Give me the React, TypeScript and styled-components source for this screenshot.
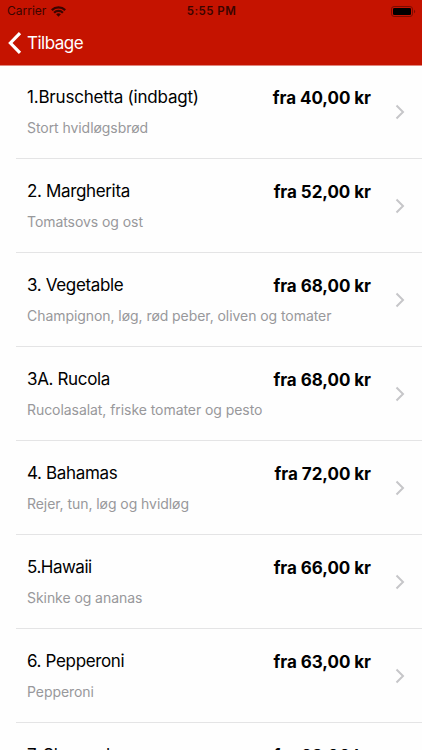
import React from "react";
import styled, { createGlobalStyle } from "styled-components";

const GlobalStyle = createGlobalStyle`
  * { box-sizing: border-box; }
  body { margin: 0; background: #fff; }
`;

const Screen = styled.div`
  width: 422px;
  height: 750px;
  overflow: hidden;
  background: #fefefe;
  font-family: Inter, "Liberation Sans", sans-serif;
  color: #000;
`;

const Header = styled.header`
  height: 66px;
  background: #c51300;
  border-bottom: 1px solid #e0867d;
`;

const StatusBar = styled.div`
  display: grid;
  grid-template-columns: 1fr auto 1fr;
  align-items: center;
  height: 22px;
  padding: 0 6px 0 7px;
  color: #3a0500;
`;

const Carrier = styled.div`
  display: flex;
  align-items: center;
  gap: 5px;
  font-size: 12px;
  line-height: 22px;
  letter-spacing: 0;
`;

const Clock = styled.div`
  font-size: 11.5px;
  font-weight: 600;
  line-height: 22px;
  letter-spacing: 0.45px;
`;

const BatterySlot = styled.div`
  display: flex;
  justify-content: flex-end;
`;

const BackButton = styled.button`
  display: flex;
  align-items: center;
  gap: 5px;
  height: 42px;
  padding: 0 0 0 8px;
  border: 0;
  background: none;
  color: #fff;
  font: 400 17px/22px Inter, sans-serif;
  letter-spacing: -0.52px;
`;

const List = styled.ul`
  margin: 0;
  padding: 0 0 0 16px;
  list-style: none;
`;

const Row = styled.li<{ $first: boolean }>`
  display: flex;
  align-items: flex-start;
  height: ${(p) => (p.$first ? 93 : 94)}px;
  padding: ${(p) => (p.$first ? 20 : 21)}px 17px 0 11px;
  border-bottom: 1px solid #e4e4e5;
`;

const Details = styled.div`
  flex: 1;
  min-width: 0;
  white-space: nowrap;
`;

const Name = styled.div<{ $tracking?: number }>`
  font-size: 17px;
  line-height: 22px;
  letter-spacing: ${(p) => p.$tracking ?? -0.35}px;
`;

const Toppings = styled.div`
  margin-top: 11px;
  color: #98989b;
  font-size: 14px;
  line-height: 18px;
  letter-spacing: -0.06px;
`;

const Price = styled.div`
  flex: none;
  margin-top: 1px;
  font-size: 17px;
  font-weight: 700;
  line-height: 22px;
  letter-spacing: -0.04px;
  white-space: nowrap;
`;

const Chevron = styled.svg`
  flex: none;
  margin: 18px 0 0 24px;
`;

type Dish = { name: string; toppings: string; price: string; tracking?: number };

const dishes: Dish[] = [
  { name: "1.Bruschetta (indbagt)", toppings: "Stort hvidløgsbrød", price: "fra 40,00 kr", tracking: -0.2 },
  { name: "2. Margherita", toppings: "Tomatsovs og ost", price: "fra 52,00 kr" },
  { name: "3. Vegetable", toppings: "Champignon, løg, rød peber, oliven og tomater", price: "fra 68,00 kr" },
  { name: "3A. Rucola", toppings: "Rucolasalat, friske tomater og pesto", price: "fra 68,00 kr" },
  { name: "4. Bahamas", toppings: "Rejer, tun, løg og hvidløg", price: "fra 72,00 kr" },
  { name: "5.Hawaii", toppings: "Skinke og ananas", price: "fra 66,00 kr", tracking: -0.5 },
  { name: "6. Pepperoni", toppings: "Pepperoni", price: "fra 63,00 kr" },
  { name: "7. Skovand", toppings: "", price: "fra 68,00 kr" },
];

const WifiIcon = () => (
  <svg width="15" height="11" viewBox="0 0 15 11" fill="none" stroke="currentColor" strokeWidth="2.3">
    <path d="M.8 4.1a9.6 9.6 0 0 1 13.4 0M3.1 6.700a6.300 6.300 0 0 1 8.800 0" />
    <path d="M7.5 10.7 5.1 8.3a3.500 3.500 0 0 1 4.800 0Z" fill="currentColor" stroke="none" />
  </svg>
);

const BatteryIcon = () => (
  <svg width="25" height="11" viewBox="0 0 25 11">
    <rect x=".5" y=".5" width="21" height="10" rx="2.6" fill="none" stroke="#7b0b00" />
    <rect x="2" y="2" width="18" height="7" rx="1.3" fill="#000" />
    <path d="M23 3.8c1.6.6 1.6 2.8 0 3.4Z" fill="#7b0b00" />
  </svg>
);

export default function App() {
  return (
    <>
      <GlobalStyle />
      <Screen>
        <Header>
          <StatusBar>
            <Carrier>
              Carrier
              <WifiIcon />
            </Carrier>
            <Clock>5:55 PM</Clock>
            <BatterySlot>
              <BatteryIcon />
            </BatterySlot>
          </StatusBar>
          <BackButton>
            <svg width="14" height="22" viewBox="0 0 14 22" fill="none" stroke="#fff" strokeWidth="3.2">
              <path d="M12 1.2 2.4 11 12 20.8" />
            </svg>
            Tilbage
          </BackButton>
        </Header>
        <List>
          {dishes.map((dish, i) => (
            <Row key={dish.name} $first={i === 0}>
              <Details>
                <Name $tracking={dish.tracking}>{dish.name}</Name>
                <Toppings>{dish.toppings}</Toppings>
              </Details>
              <Price>{dish.price}</Price>
              <Chevron width="10" height="16" viewBox="0 0 10 16" fill="none" stroke="#c6c6c9" strokeWidth="2">
                <path d="M1.5 1.5 8 8l-6.500 6.500" />
              </Chevron>
            </Row>
          ))}
        </List>
      </Screen>
    </>
  );
}
